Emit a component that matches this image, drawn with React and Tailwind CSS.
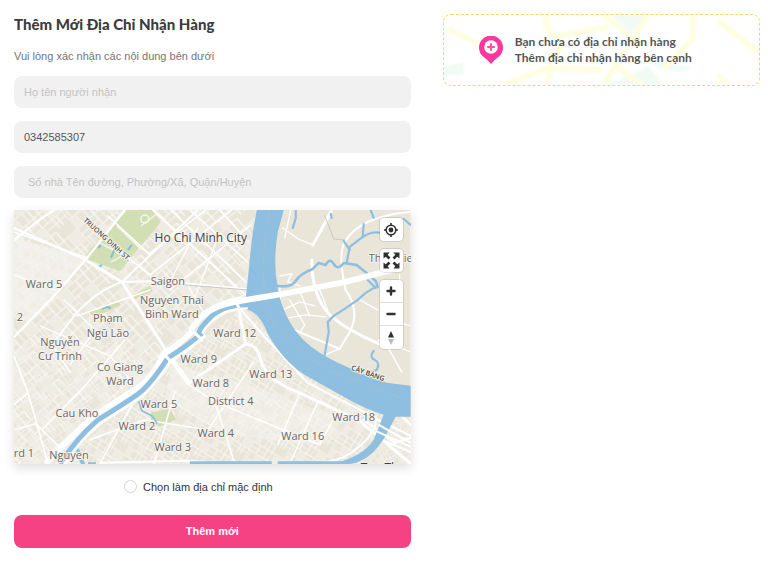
import React from "react";

const LABELS = [
  ["Ward 5", 44, 288],
  ["Saigon", 168, 285],
  ["Nguyen Thai", 172, 304],
  ["Binh Ward", 172, 318],
  ["Phạm", 108, 322],
  ["Ngũ Lão", 108, 337],
  ["Nguyễn", 60, 346],
  ["Cư Trinh", 60, 360],
  ["2", 20, 321],
  ["Ward 12", 235, 337],
  ["Ward 9", 199, 363],
  ["Co Giang", 120, 371],
  ["Ward", 120, 385],
  ["Ward 13", 271, 378],
  ["Ward 8", 211, 387],
  ["District 4", 231, 405],
  ["Ward 5", 159, 408],
  ["Cau Kho", 77, 417],
  ["Ward 2", 137, 430],
  ["Ward 18", 354, 421],
  ["Ward 4", 216, 437],
  ["Ward 16", 303, 440],
  ["Ward 3", 173, 451],
  ["rd 1", 24, 457],
  ["Nguyen", 69, 459],
];

const BLOCKS = (
  <>
    <path d="M0 0H48M0 13H48M0 25H30M0 37H48M0 0V37M12 0V13M23 0V37M36 0V25M30 25V37M8 25V37M41 13V25" fill="none" stroke="#fbfaf8" strokeWidth="1.2" />
    <path d="M0 7H23M23 19H48M17 13V37M30 0V13M4 13V25" fill="none" stroke="#f8f7f3" strokeWidth="1" />
    <path d="M12 13h11v12h-11zM36 0h12v13h-12zM0 25h8v12h-8z" fill="#efece3" />
  </>
);

function CityMap() {
  return (
    <svg viewBox="14 210 397 254" preserveAspectRatio="xMidYMid slice" className="block h-full w-full" role="img" aria-label="Ho Chi Minh City">
      <defs>
        <pattern id="gridA" width="48" height="37" patternUnits="userSpaceOnUse" patternTransform="rotate(-42)">{BLOCKS}</pattern>
        <pattern id="gridB" width="48" height="37" patternUnits="userSpaceOnUse" patternTransform="rotate(32) scale(.72)">{BLOCKS}</pattern>
        <pattern id="gridC" width="48" height="37" patternUnits="userSpaceOnUse" patternTransform="rotate(-35) scale(.62)">{BLOCKS}</pattern>
        <pattern id="gridD" width="48" height="37" patternUnits="userSpaceOnUse" patternTransform="rotate(62) scale(.5)">{BLOCKS}</pattern>
        <clipPath id="eastBank">
          <path d="M284 210L278 232Q273 262 278 288Q281 306 290 322Q300 340 320 353T387 383L411 386V210Z" />
        </clipPath>
      </defs>

      <rect x="14" y="210" width="397" height="254" fill="#e9e5d9" />
      <path d="M14 210H258L246 300L205 318L165 355L130 400L58 464H14Z" fill="url(#gridA)" />
      <path d="M14 238L88 258L30 322L14 318Z" fill="#f1efe9" />
      <path d="M14 238L88 258L30 322L14 318Z" fill="url(#gridD)" opacity=".7" />
      <path d="M14 345L70 330L115 345L165 352L130 400L58 464H14Z" fill="url(#gridC)" opacity=".8" />
      <path d="M244 308L268 332L310 378L383 415L378 440L350 464H60L130 402L172 358Z" fill="url(#gridB)" />
      <path d="M172 365L250 385L345 420L320 445L225 435L165 400Z" fill="#f3f1ec" opacity=".5" />
      <path d="M172 365L250 385L345 420L320 445L225 435L165 400Z" fill="url(#gridD)" opacity=".6" />
      <path d="M394 417H411V464H357Z" fill="url(#gridD)" />

      {/* parks */}
      <g fill="#d2deb3">
        <path d="M126 210H152L161 222L120 271L86 259Q86 252 98 242Z" />
        <path d="M89 311L118 301L121 305L94 318Z" />
        <path d="M131 296L150 286L153 291L135 299Z" />
        <path d="M151 413L170 409L176 420L160 427L151 421Z" />
        <path d="M252 237L254 250L249 266Z" />
      </g>
      <circle cx="145" cy="219" r="4" fill="none" stroke="#f4f6ea" strokeWidth="1.5" />
      <path d="M117 226L142 250M98 242L122 255M111 262L126 254M141 226L158 213" fill="none" stroke="#f4f6ea" strokeWidth="1.5" />
      <path d="M98 248l3-3M111 258l4-9M128 250l4-5M99 267l3-2M102 309l5-2 4 1" fill="none" stroke="#86bcd8" strokeWidth="2" />

      {/* streets west of the river */}
      <g fill="none" stroke="#fff" strokeLinecap="round" strokeLinejoin="round">
        <path d="M84 259L122 282L166 350L188 380" strokeWidth="3" />
        <path d="M14 337L56 294L87 258L125 210M14 228L84 259M14 240L42 218L54 210" strokeWidth="2.4" />
        <path d="M122 282L160 281L246 289M122 282Q95 292 75 315L52 345M95 232L150 275M153 210L248 297M122 282L198 210" strokeWidth="2" />
        <path d="M108 216L149 254L206 210M171 210L246 282M190 210L248 262M150 275L232 210M170 290L250 226M77 316L150 290M14 356L28 393L48 464M42 430L86 385L125 340M28 393L14 405M52 345L70 372M14 430L36 424L62 450" strokeWidth="1.6" />
        <path d="M88 258L14 232M40 326L110 356L134 384M64 300L95 330L70 365M134 300L160 340M186 282L205 315M218 238L194 300M198 228L170 282M220 210L240 232M14 275L55 290" strokeWidth="1.3" />
        <path d="M170 358L188 384L246 344L238 306M246 344Q258 344 262 364Q270 382 300 393L360 421L411 464" strokeWidth="3" />
        <path d="M188 384L215 402L235 464M300 393L278 445M175 392L154 464M215 402L320 445M254 362L208 430M318 402L290 464M338 411L320 445M90 440L145 420L206 430M100 464L132 405" strokeWidth="1.5" />
        <path d="M364 420L395 443L411 438M372 417L411 436M402 416L411 425M382 440L411 452" strokeWidth="2.4" />
        <path d="M236 304L265 337L308 383L376 418Q378 435 350 454T190 461L100 463" strokeWidth="2" />
      </g>
      <path d="M160 283L248 290" stroke="#c9c9c6" strokeWidth="1" />

      {/* streets of the east bank */}
      <g clipPath="url(#eastBank)" fill="none" stroke="#fff" strokeLinecap="round">
        <path d="M332 210L322 229L313 245M312 260Q312 296 330 315Q350 333 390 348" strokeWidth="3" />
        <path d="M411 212Q360 216 345 242Q338 255 346 290Q361 312 350 332L340 349L292 329Q278 308 280 286" strokeWidth="2" />
        <path d="M280 276L292 274L288 282L300 286M283 310L300 302L315 306M287 318L306 315L326 317M290 300L305 325L300 333M318 285L328 310M300 291L310 316M340 349L325 355M291 210L285 238M301 240L313 245M283 228L300 240" strokeWidth="1.3" />
        <path d="M378 340L411 352M388 347L402 372M400 275V330M385 318L411 326M360 300L378 310" strokeWidth="1.4" />
        <path d="M325 216Q330 228 334 239L345 240" stroke="#cbc9bd" strokeWidth="1" />
      </g>

      {/* creeks */}
      <g fill="none" stroke="#8ebfe0" strokeLinecap="round" strokeLinejoin="round">
        <path d="M278 286Q292 288 296 281T313 269L319 263L326 265Q330 257 334 264T344 263L357 265Q366 272 376 281L378 287" strokeWidth="2.6" />
        <path d="M347 263L350 247L363 237Q372 231 382 233M350 250L344 241M363 237L364 224M404 219L411 225M371 210L374 218" strokeWidth="2.2" />
        <path d="M296 210V218L293 228M331 214L332 218M325 355L329 332L328 322L334 316L345 309L358 300L366 293L376 287" strokeWidth="2.2" />
        <path d="M376 288L368 280M374 351Q369 357 375 360T377 370L371 372" strokeWidth="2.2" />
        <path d="M139 402L142 411L152 416L157 423" strokeWidth="1.8" />
        <path d="M77 450L83 464" strokeWidth="4" />
      </g>

      {/* rivers */}
      <path d="M257 210H284L278 232Q273 262 278 288Q281 306 290 322Q300 340 320 353T387 383L411 386V417H396L386 436Q372 460 352 464H334Q364 456 374 440L384 415Q370 411 353 402L310 378Q285 364 268 334Q260 312 246 309Q234 308 246 298L253 232Z" fill="#8ebfe0" />
      <path d="M270 210Q260 262 266 300T330 371L411 402" fill="none" stroke="#a4bfcc" strokeWidth="1" strokeDasharray="14 7" />
      <path d="M190 463H272M278 463H350M88 464H96" stroke="#8ebfe0" strokeWidth="3" />
      <path d="M242 299Q216 304 203 316T192 332Q176 347 164 354Q152 380 135 390T94 417Q70 437 46 464" fill="none" stroke="#fff" strokeWidth="6" />
      <path d="M248 305Q225 306 211 319T201 336Q182 353 169 359Q151 387 138 396T98 422Q78 439 62 464" fill="none" stroke="#fff" strokeWidth="8" />
      <path d="M252 305Q224 304 210 318T200 335Q182 350 168 358Q150 386 137 395T98 420Q77 438 60 464" fill="none" stroke="#8ebfe0" strokeWidth="5" />
      <path d="M194 332L203 341M163 353L172 363M235 299L240 310" fill="none" stroke="#fff" strokeWidth="3" />
      <path d="M203 315Q218 304 240 301L283 294L346 282L400 268" fill="none" stroke="#fff" strokeWidth="6" />
      <path d="M376 431L411 447M379 425L411 443" stroke="#fff" strokeWidth="2" />

      {/* place names */}
      <g fontFamily="'Open Sans', 'Noto Sans', sans-serif" stroke="#f5f3ee" strokeWidth="2" paintOrder="stroke" strokeLinejoin="round">
        <g fontSize="11" fill="#6c6763" textAnchor="middle">
          {LABELS.map(([name, x, y]) => (
            <text key={name + x} x={x} y={y}>{name}</text>
          ))}
        </g>
        <text x="369" y="262" fontSize="11" fill="#6c6763">Thu Thiem</text>
        <text x="361" y="472" fontSize="12" fill="#3f3f3f">Tan Thuan</text>
        <text x="201" y="242" fontSize="12" fontWeight="500" fill="#444" textAnchor="middle">Ho Chi Minh City</text>
        <text transform="translate(83 221) rotate(42)" fontSize="7" fontWeight="600" fill="#555">TRUONG DINH ST.</text>
        <text transform="translate(351 370) rotate(19)" fontSize="7" fontWeight="600" fill="#444">CÂY BÀNG</text>
      </g>
    </svg>
  );
}

function MapControls() {
  const box = "rounded bg-white shadow-[0_0_0_1px_rgba(0,0,0,0.1)]";
  const btn = "flex h-[23px] w-[23px] items-center justify-center text-[#303030]";
  return (
    <div className="absolute top-2 right-2 flex flex-col gap-2">
      <button type="button" aria-label="Find my location" className={`${box} ${btn}`}>
        <svg viewBox="0 0 16 16" className="h-4 w-4" fill="none" stroke="currentColor">
          <circle cx="8" cy="8" r="4.8" strokeWidth="1.6" />
          <circle cx="8" cy="8" r="2.4" fill="currentColor" stroke="none" />
          <path d="M8 1v2.5M8 12.5V15M1 8h2.5M12.5 8H15" strokeWidth="1.6" />
        </svg>
      </button>
      <button type="button" aria-label="Full screen" className={`${box} ${btn}`}>
        <svg viewBox="0 0 16 16" className="h-[17px] w-[17px]" fill="currentColor">
          <path d="M0.5 0.5H6.2L4.4 2.6L7 5.2L5.2 7L2.6 4.4L0.5 6.2Z" />
          <path d="M15.5 0.5V6.2L13.4 4.4L10.8 7L9 5.2L11.6 2.6L9.8 0.5Z" />
          <path d="M0.5 15.5V9.8L2.6 11.6L5.2 9L7 10.8L4.4 13.4L6.2 15.5Z" />
          <path d="M15.5 15.5H9.8L11.6 13.4L9 10.8L10.8 9L13.4 11.6L15.5 9.8Z" />
        </svg>
      </button>
      <div className={`${box} divide-y divide-[#ddd]`}>
        <button type="button" aria-label="Zoom in" className={btn}>
          <svg viewBox="0 0 10 10" className="h-[10px] w-[10px]" stroke="currentColor" strokeWidth="2.4" strokeLinecap="round">
            <path d="M5 1.5V8.5M1.5 5H8.5" />
          </svg>
        </button>
        <button type="button" aria-label="Zoom out" className={btn}>
          <svg viewBox="0 0 10 10" className="h-[10px] w-[10px]" stroke="currentColor" strokeWidth="2.4" strokeLinecap="round">
            <path d="M1.5 5H8.5" />
          </svg>
        </button>
        <button type="button" aria-label="Reset north" className={btn}>
          <svg viewBox="0 0 8 14" className="h-[14px] w-2">
            <path d="M4 0L7 6.5H1Z" fill="#303030" />
            <path d="M4 14L7 8H1Z" fill="#bbb" />
          </svg>
        </button>
      </div>
    </div>
  );
}

function EmptyNotice() {
  return (
    <aside className="relative overflow-hidden rounded-lg border border-dashed border-[#fbd76a]">
      <svg viewBox="0 0 317 71" preserveAspectRatio="none" className="absolute inset-0 h-full w-full blur-[1px]" aria-hidden="true">
        <g fill="#f0fbf6">
          <path d="M0 52L20 48V60L0 62Z" />
          <path d="M168 0H205L188 18ZM204 44L250 54L238 58L215 54ZM205 52L222 71H165Z" />
          <path d="M50 26H72V40H50Z" opacity=".6" />
        </g>
        <g fill="none" stroke="#fffde0" strokeWidth="6">
          <path d="M4 14L36 30M103 0Q100 14 112 22T108 44L104 71M60 71L104 54L160 56M112 22L165 12" />
          <path d="M160 0L196 28M172 52L200 71M205 0L160 71M250 0V24L220 56M275 6L317 38M275 60L285 71" />
        </g>
      </svg>
      <div className="relative flex items-center gap-3 py-[19px] pl-[35px]">
        <svg viewBox="0 0 24 28" className="h-7 w-6 shrink-0" aria-hidden="true">
          <path d="M12 28Q9 24 4 20.500A12 12 0 1 1 20 20.500Q15 24 12 28Z" fill="#fb389e" />
          <circle cx="12" cy="11" r="6.800" fill="#fff" />
          <path d="M12 7.200V14.800M8.200 11H15.800" stroke="#f4559f" strokeWidth="2" />
        </svg>
        <p className="font-['Lato','Noto_Sans',sans-serif] text-[12px] leading-4 font-bold text-[#555]">
          Bạn chưa có địa chỉ nhận hàng
          <br />
          Thêm địa chỉ nhận hàng bên cạnh
        </p>
      </div>
    </aside>
  );
}

export default function App() {
  const field = "h-8 w-full rounded-lg bg-[#f1f1f1] text-[#555] outline-none placeholder:text-[#c3c3c3]";
  return (
    <main className="grid min-h-screen grid-cols-[5fr_4fr] items-start gap-8 bg-white pt-[14px] pr-2 pb-4 pl-[14px] font-['Liberation_Sans',Arial,sans-serif] text-[11px]">
      <form className="flex flex-col" onSubmit={(e) => e.preventDefault()}>
        <h1 className="font-['Lato','Noto_Sans',sans-serif] text-[15px] leading-5 font-black text-[#3c3c3c]">Thêm Mới Địa Chỉ Nhận Hàng</h1>
        <p className="mt-[14px] leading-4 text-[#757575]">Vui lòng xác nhận các nội dung bên dưới</p>
        <div className="mt-3 flex flex-col gap-[13px]">
          <input className={`${field} px-[10px]`} type="text" aria-label="Họ tên người nhận" placeholder="Họ tên người nhận" />
          <input className={`${field} px-[10px]`} type="tel" aria-label="Số điện thoại" defaultValue="0342585307" />
          <input className={`${field} px-[14px]`} type="text" aria-label="Địa chỉ" placeholder="Số nhà Tên đường, Phường/Xã, Quận/Huyện" />
        </div>
        <div className="relative mt-3 aspect-[397/254] shadow-[0_4px_10px_rgba(0,0,0,0.13)]">
          <CityMap />
          <MapControls />
        </div>
        <label className="mt-[15px] mr-7 flex items-center justify-center gap-[6px] leading-4 text-[#333]">
          <input type="radio" name="default-address" className="h-[13px] w-[13px] appearance-none rounded-full border border-[#d4d4d4] bg-white checked:border-4 checked:border-[#f64282]" />
          Chọn làm địa chỉ mặc định
        </label>
        <button type="submit" className="mt-5 h-[33px] rounded-lg bg-[#f64282] font-bold text-white">Thêm mới</button>
      </form>
      <EmptyNotice />
    </main>
  );
}
